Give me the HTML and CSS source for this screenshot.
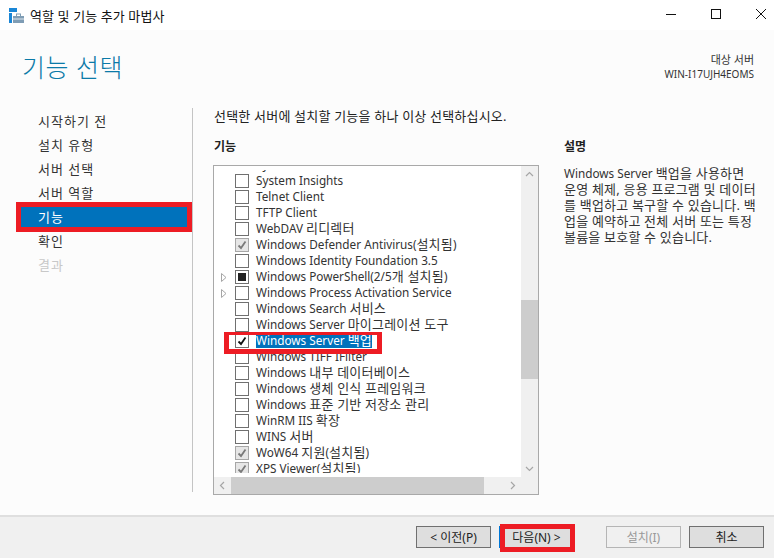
FILE: index.html
```html
<!DOCTYPE html>
<html lang="ko">
<head>
    <meta charset="UTF-8">
    <title>역할 및 기능 추가 마법사</title>
    <link rel="stylesheet" href="styles.css">
</head>
<body>
    <div class="window">
        <div class="titlebar">
            <svg class="app-icon" width="15" height="15" viewBox="0 0 15 15">
                <rect x="0" y="0" width="8" height="4" fill="#1a86d6"/>
                <rect x="0" y="5" width="3" height="10" fill="#1a86d6"/>
                <path d="M4 8h3V5.5h5V8h3v7H4z" fill="#7f9db5"/>
                <rect x="8" y="6.5" width="3" height="1.5" fill="#fff"/>
                <rect x="4" y="10.5" width="11" height="1" fill="#dfe7ee"/>
            </svg>
            <span class="title-text">역할 및 기능 추가 마법사</span>
            <div class="window-controls">
                <svg width="12" height="12" viewBox="0 0 12 12"><path d="M1 6.5h10" stroke="#111" fill="none"/></svg>
                <svg width="12" height="12" viewBox="0 0 12 12"><rect x="1.5" y="1.5" width="9" height="9" stroke="#111" fill="none"/></svg>
                <svg width="12" height="12" viewBox="0 0 12 12"><path d="M1 1l10 10M11 1L1 11" stroke="#111" fill="none"/></svg>
            </div>
        </div>

        <div class="content">
            <div class="header">
                <h1>기능 선택</h1>
                <div class="target">
                    <div class="ko-small">대상 서버</div>
                    <div>WIN-I17UJH4EOMS</div>
                </div>
            </div>

            <div class="body-row">
                <nav class="steps">
                    <div class="step">시작하기 전</div>
                    <div class="step">설치 유형</div>
                    <div class="step">서버 선택</div>
                    <div class="step">서버 역할</div>
                    <div class="step active">기능</div>
                    <div class="step">확인</div>
                    <div class="step disabled">결과</div>
                </nav>

                <main class="main">
                    <p class="intro">선택한 서버에 설치할 기능을 하나 이상 선택하십시오.</p>
                    <div class="columns">
                        <section class="features">
                            <h2>기능</h2>
                            <div class="listbox">
                                <div class="list-top">
                                    <div class="list-view">
                                        <div class="rows">
                                            <div class="row clipped"><span class="arrow"></span><span class="check"></span><span class="label">System Data Archiver</span></div>
                                            <div class="row"><span class="arrow"></span><span class="check"></span><span class="label">System Insights</span></div>
                                            <div class="row"><span class="arrow"></span><span class="check"></span><span class="label">Telnet Client</span></div>
                                            <div class="row"><span class="arrow"></span><span class="check"></span><span class="label">TFTP Client</span></div>
                                            <div class="row"><span class="arrow"></span><span class="check"></span><span class="label">WebDAV <span class="ko">리디렉터</span></span></div>
                                            <div class="row"><span class="arrow"></span><span class="check installed"><svg width="12" height="12" viewBox="0 0 12 12"><path d="M2.5 6.5l2.5 2.5 4.5-6.5" stroke="#7a7a7a" stroke-width="1.8" fill="none"/></svg></span><span class="label">Windows Defender Antivirus(<span class="ko">설치됨</span>)</span></div>
                                            <div class="row"><span class="arrow"></span><span class="check"></span><span class="label">Windows Identity Foundation 3.5</span></div>
                                            <div class="row"><span class="arrow"><svg width="6" height="9" viewBox="0 0 6 9"><path d="M.5.5l4.5 4-4.5 4z" stroke="#a6a6a6" fill="none"/></svg></span><span class="check partial"><i></i></span><span class="label">Windows PowerShell(2/5<span class="ko">개 설치됨</span>)</span></div>
                                            <div class="row"><span class="arrow"><svg width="6" height="9" viewBox="0 0 6 9"><path d="M.5.5l4.5 4-4.5 4z" stroke="#a6a6a6" fill="none"/></svg></span><span class="check"></span><span class="label">Windows Process Activation Service</span></div>
                                            <div class="row"><span class="arrow"></span><span class="check"></span><span class="label">Windows Search <span class="ko">서비스</span></span></div>
                                            <div class="row"><span class="arrow"></span><span class="check"></span><span class="label">Windows Server <span class="ko">마이그레이션 도구</span></span></div>
                                            <div class="row"><span class="arrow"></span><span class="check on"><svg width="12" height="12" viewBox="0 0 12 12"><path d="M2.5 6.5l2.5 2.5 4.5-6.5" stroke="#111" stroke-width="1.8" fill="none"/></svg></span><span class="label selected">Windows Server <span class="ko">백업</span></span></div>
                                            <div class="row"><span class="arrow"></span><span class="check"></span><span class="label">Windows TIFF IFilter</span></div>
                                            <div class="row"><span class="arrow"></span><span class="check"></span><span class="label">Windows <span class="ko">내부 데이터베이스</span></span></div>
                                            <div class="row"><span class="arrow"></span><span class="check"></span><span class="label">Windows <span class="ko">생체 인식 프레임워크</span></span></div>
                                            <div class="row"><span class="arrow"></span><span class="check"></span><span class="label">Windows <span class="ko">표준 기반 저장소 관리</span></span></div>
                                            <div class="row"><span class="arrow"></span><span class="check"></span><span class="label">WinRM IIS <span class="ko">확장</span></span></div>
                                            <div class="row"><span class="arrow"></span><span class="check"></span><span class="label">WINS <span class="ko">서버</span></span></div>
                                            <div class="row"><span class="arrow"></span><span class="check installed"><svg width="12" height="12" viewBox="0 0 12 12"><path d="M2.5 6.5l2.5 2.5 4.5-6.5" stroke="#7a7a7a" stroke-width="1.8" fill="none"/></svg></span><span class="label">WoW64 <span class="ko">지원</span>(<span class="ko">설치됨</span>)</span></div>
                                            <div class="row"><span class="arrow"></span><span class="check installed"><svg width="12" height="12" viewBox="0 0 12 12"><path d="M2.5 6.5l2.5 2.5 4.5-6.5" stroke="#7a7a7a" stroke-width="1.8" fill="none"/></svg></span><span class="label">XPS Viewer(<span class="ko">설치됨</span>)</span></div>
                                        </div>
                                    </div>
                                    <div class="vscroll">
                                        <svg width="17" height="17" viewBox="0 0 17 17"><path d="M5 10l3.5-3.5L12 10" stroke="#a6a6a6" stroke-width="1.2" fill="none"/></svg>
                                        <div class="vtrack"><div class="vthumb"></div></div>
                                        <svg width="17" height="17" viewBox="0 0 17 17"><path d="M5 7l3.5 3.5L12 7" stroke="#a6a6a6" stroke-width="1.2" fill="none"/></svg>
                                    </div>
                                </div>
                                <div class="hscroll">
                                    <svg width="17" height="17" viewBox="0 0 17 17"><path d="M10 5L6.5 8.5 10 12" stroke="#a6a6a6" stroke-width="1.2" fill="none"/></svg>
                                    <div class="hthumb"></div>
                                    <div class="htrack"></div>
                                    <svg width="17" height="17" viewBox="0 0 17 17"><path d="M7 5l3.5 3.5L7 12" stroke="#a6a6a6" stroke-width="1.2" fill="none"/></svg>
                                    <div class="corner"></div>
                                </div>
                            </div>
                            <div class="mark mark-row"></div>
                        </section>
                        <aside class="description">
                            <h2>설명</h2>
                            <p>Windows Server <span class="ko">백업을 사용하면</span><br><span class="ko">운영 체제, 응용 프로그램 및 데이터</span><br><span class="ko">를 백업하고 복구할 수 있습니다. 백</span><br><span class="ko">업을 예약하고 전체 서버 또는 특정</span><br><span class="ko">볼륨을 보호할 수 있습니다.</span></p>
                        </aside>
                    </div>
                </main>
            </div>
        </div>

        <div class="footer">
            <button class="btn">&lt; 이전(P)</button>
            <button class="btn next">다음(N) &gt;<span class="mark mark-next"></span></button>
            <button class="btn install" disabled>설치(I)</button>
            <button class="btn">취소</button>
        </div>
    </div>
</body>
</html>
```
FILE: styles.css
```css
* {
    box-sizing: border-box;
}
body {
    margin: 0;
    font-family: "Noto Sans", "Noto Sans CJK KR", sans-serif;
    font-size: 12px;
    color: #222;
    background-color: #fcfcfc;
}
.ko {
    font-size: 13px;
    line-height: 1;
    letter-spacing: .2px;
}
.window {
    width: 774px;
    height: 558px;
    display: flex;
    flex-direction: column;
    overflow: hidden;
}
.titlebar {
    height: 30px;
    flex: none;
    display: flex;
    align-items: center;
    background-color: #fff;
    padding-left: 9px;
    color: #111;
}
.app-icon {
    margin-right: 6px;
}
.title-text {
    font-size: 13px;
    letter-spacing: .1px;
}
.window-controls {
    margin-left: auto;
    display: flex;
    gap: 33px;
    padding-right: 7px;
    margin-top: -2px;
}
.window-controls svg {
    display: block;
}
.content {
    flex: 1;
    display: flex;
    flex-direction: column;
}
.header {
    height: 78px;
    flex: none;
    display: flex;
    justify-content: space-between;
    padding: 18px 20px 0 22px;
}
h1 {
    margin: 0;
    font-size: 25px;
    font-weight: 300;
    line-height: 38px;
    color: #0b7aa8;
    letter-spacing: .5px;
}
.target {
    text-align: right;
    font-size: 10px;
    line-height: 14px;
    padding-top: 5px;
    color: #333;
}
.ko-small {
    font-size: 11px;
}
.body-row {
    display: flex;
    height: 384px;
}
.steps {
    width: 193px;
    flex: none;
    border-right: 1px solid #c4c4c4;
    padding: 1px 0 0 16px;
}
.step {
    height: 24px;
    line-height: 24px;
    padding-left: 22px;
    font-size: 13px;
    letter-spacing: 1px;
    color: #333;
}
.step.active {
    height: 30px;
    line-height: 20px;
    margin: -3px 0;
    padding-left: 17px;
    border: 5px solid #ed1c24;
    background-color: #0072bc;
    color: #fff;
}
.step.disabled {
    color: #c8c8c8;
}
.main {
    flex: 1;
    padding-left: 20px;
    min-width: 0;
}
.intro {
    margin: 0;
    height: 30px;
    line-height: 16px;
    padding-left: 1px;
    font-size: 13px;
    letter-spacing: .2px;
}
.columns {
    display: flex;
}
h2 {
    margin: 0;
    font-size: 12px;
    font-weight: 700;
    line-height: 17px;
    height: 27px;
    padding-left: 1px;
}
.features {
    position: relative;
    width: 326px;
    flex: none;
}
.listbox {
    height: 330px;
    border: 1px solid #a9a9a9;
    background-color: #fff;
    display: flex;
    flex-direction: column;
}
.list-top {
    flex: 1;
    display: flex;
    min-height: 0;
}
.list-view {
    flex: 1;
    overflow: hidden;
    margin: 4px 0 4px;
}
.rows {
    margin-top: -13px;
}
.row {
    height: 16px;
    display: flex;
    align-items: center;
    white-space: nowrap;
    color: #333;
}
.arrow {
    width: 21px;
    flex: none;
    padding-left: 7px;
    display: flex;
}
.check {
    width: 14px;
    height: 14px;
    flex: none;
    border: 1px solid #707070;
    background-color: #fff;
    display: flex;
    align-items: center;
    justify-content: center;
}
.check.installed {
    background-color: #e6e6e6;
    border-color: #a6a6a6;
}
.check.partial i {
    width: 8px;
    height: 8px;
    background-color: #222;
}
.clipped .check {
    visibility: hidden;
}
.label {
    margin: -2px 0 0 7px;
    height: 15px;
    line-height: 15px;
    font-size: 11.75px;
}
.label.selected {
    background-color: #0072bc;
    color: #fff;
}
.vscroll {
    width: 17px;
    flex: none;
    display: flex;
    flex-direction: column;
    background-color: #f0f0f0;
}
.vscroll svg,
.hscroll svg {
    flex: none;
    display: block;
}
.vtrack {
    flex: 1;
    padding-top: 117px;
}
.vthumb {
    height: 79px;
    background-color: #cdcdcd;
}
.hscroll {
    height: 17px;
    flex: none;
    display: flex;
    background-color: #f0f0f0;
}
.hthumb {
    width: 253px;
    background-color: #cdcdcd;
}
.htrack {
    flex: 1;
}
.corner {
    width: 17px;
}
.description {
    margin-left: 24px;
    width: 190px;
    flex: none;
}
.description p {
    margin: 0;
    line-height: 16px;
    padding-left: 1px;
    font-size: 11.75px;
    white-space: nowrap;
    color: #333;
}
.footer {
    height: 43px;
    flex: none;
    border-top: 2px solid #dfdfdf;
    background-color: #f0f0f0;
    display: flex;
    align-items: flex-start;
    padding: 9px 10px 0 416px;
}
.btn {
    position: relative;
    width: 75px;
    height: 22px;
    border: 1px solid #707070;
    background-color: #dedede;
    font-family: inherit;
    font-size: 12px;
    color: #222;
    padding: 0;
    margin-right: 8px;
}
.btn:last-child {
    margin-right: 0;
}
.btn.next {
    border-color: #0078d7;
    margin-right: 32px;
}
.btn.install {
    background-color: #f0f0f0;
    border-color: #b5b5b5;
    color: #999;
}
.mark {
    position: absolute;
    border: 5px solid #ed1c24;
}
.mark-row {
    left: 11px;
    top: 194px;
    width: 158px;
    height: 22px;
    border-top-width: 3px;
}
.mark-next {
    left: 0;
    top: -3px;
    width: 75px;
    height: 28px;
}
```
